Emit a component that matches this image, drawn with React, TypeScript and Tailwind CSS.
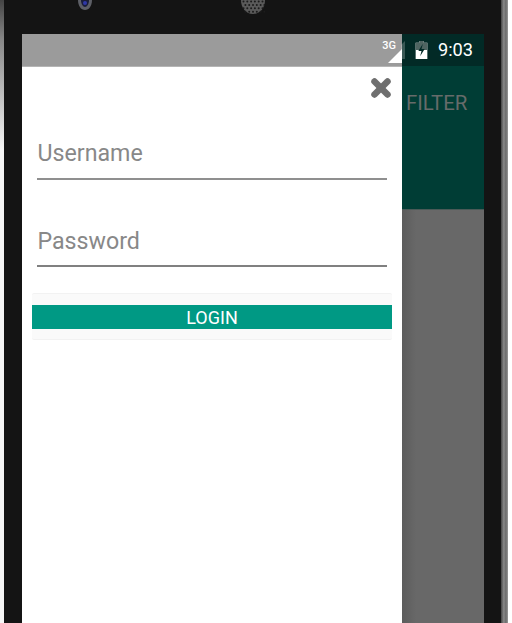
import { X } from 'lucide-react';

function Camera() {
  return (
    <svg width="14" height="10" viewBox="0 0 14 10">
      <path d="M0 0h14c0 6-3 10-7 10S0 6 0 0z" fill="#5d5f66" />
      <path d="M3 0h8c0 4-2 7-4 7S3 4 3 0z" fill="#1a1d3a" />
      <circle cx="7" cy="3" r="2" fill="#2f38a8" />
    </svg>
  );
}

function Speaker() {
  const dots = [];
  for (let row = 0; row < 4; row++) {
    for (let col = 0; col < 6; col++) {
      dots.push(<circle key={`${row}-${col}`} cx={2.5 + col * 3.8 + (row % 2) * 1.9} cy={1.5 + row * 3.4} r="1" fill="#1c1c1c" />);
    }
  }
  return (
    <svg width="24" height="14" viewBox="0 0 24 14">
      <path d="M0 0h24c0 8-5 14-12 14S0 8 0 0z" fill="#5a5a5a" />
      {dots}
    </svg>
  );
}

export default function App() {
  return (
    <div className="h-[623px] w-[512px] overflow-hidden flex bg-white font-['Roboto',sans-serif]">
      <div className="w-[4px] bg-[linear-gradient(180deg,#444444,#888888_40px,#f6f6f6_150px)]" />
      {/* phone body */}
      <div className="w-[497px] bg-[#141414] flex flex-col">
        <div className="h-[34px] flex items-start pl-[74px]">
          <div className="mr-[149px] flex"><Camera /></div>
          <div className="flex"><Speaker /></div>
        </div>
        <div className="ml-[18px] w-[462px] flex flex-1 min-h-0">
          {/* drawer */}
          <div className="w-[380px] flex flex-col bg-white">
            <div className="h-[33px] bg-[#9b9b9b] flex justify-end items-center border-b border-[#b5b5b5] relative">
              <span className="absolute right-[6px] top-[6px] text-white text-[11px] leading-[12px] font-medium">3G</span>
              <svg width="14" height="18" viewBox="0 0 14 18" className="mt-[7px]">
                <path d="M0 18 L14 4 V18 Z" fill="#ffffff" />
              </svg>
              <svg width="4" height="18" viewBox="0 0 4 18" className="absolute right-[-3px] top-[7px]">
                <path d="M0 4 L4 0 V18 H0 Z" fill="#ffffff" fillOpacity="0.22" />
              </svg>
            </div>
            <div className="flex justify-end pt-[8px] pr-[8px]">
              <X size={26} strokeWidth={6} className="text-[#6f6f6f]" />
            </div>
            <div className="ml-[15px] pl-[0.5px] w-[350px] mt-[40px] h-[39px] border-b-2 border-[#8f8f8f] text-[23.2px] leading-[25px] text-[#888888]">Username</div>
            <div className="ml-[15px] pl-[0.5px] w-[350px] mt-[47px] h-[40px] border-b-2 border-[#808080] text-[23.2px] leading-[28px] text-[#888888]">Password</div>
            <div className="ml-[10px] w-[360px] mt-[26px] h-[47px] bg-[#fafafa] border-y border-[#f2f2f2] rounded-[2px] flex items-center">
              <div className="w-full h-[24px] bg-[#009984] text-white text-[18px] leading-[26px] text-center">LOGIN</div>
            </div>
          </div>
          {/* page behind */}
          <div className="flex-1 flex flex-col bg-[linear-gradient(90deg,#5c5c5c,#686868_14px)]">
            <div className="h-[32px] bg-[#022a26] flex items-center justify-end pr-[11px] gap-[10px]">
              <svg width="13" height="18" viewBox="0 0 13 20">
                <path d="M4 0h5v2h4v18H0V2h4z" fill="#ffffff" />
                <path d="M0 2h4V0h5v2h4v8H0z" fill="#4f6461" />
                <path d="M8 3 3 11h3.5L5 17l5-8H6.5z" fill="#022a26" />
              </svg>
              <span className="text-white text-[18.2px] leading-none mt-[1px]">9:03</span>
            </div>
            <div className="h-[144px] bg-[#003d35] border-b border-[#4a5a57] pl-[4px] pt-[25px] text-[20.4px] leading-[24px] text-[#666b6a]">FILTER</div>
          </div>
        </div>
      </div>
      <div className="w-[7px] bg-[linear-gradient(90deg,#444444,#8a8a8a_40%,#6a6a6a_70%,#9a9a9a)]" />
    </div>
  );
}
